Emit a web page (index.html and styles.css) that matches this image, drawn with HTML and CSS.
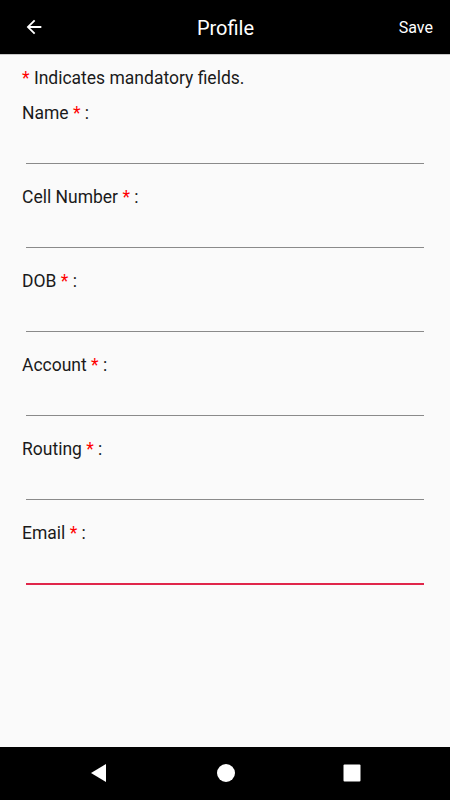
FILE: index.html
```html
<!DOCTYPE html>
<html>
<head>
<meta charset="utf-8">
<link rel="stylesheet" href="styles.css">
</head>
<body>
<div class="screen">
  <header class="topbar">
    <div class="back">
      <svg width="22" height="22" viewBox="0 0 24 24"><path d="M20 11H7.83l5.59-5.59L12 4l-8 8 8 8 1.41-1.41L7.83 13H20v-2z" fill="#fff"/></svg>
    </div>
    <div class="title">Profile</div>
    <div class="save">Save</div>
  </header>
  <main class="content">
    <p class="note"><span class="req">*</span> Indicates mandatory fields.</p>
    <div class="field"><div class="label">Name <span class="req">*</span> :</div><div class="line"></div></div>
    <div class="field"><div class="label">Cell Number <span class="req">*</span> :</div><div class="line"></div></div>
    <div class="field"><div class="label">DOB <span class="req">*</span> :</div><div class="line"></div></div>
    <div class="field"><div class="label">Account <span class="req">*</span> :</div><div class="line"></div></div>
    <div class="field"><div class="label">Routing <span class="req">*</span> :</div><div class="line"></div></div>
    <div class="field"><div class="label">Email <span class="req">*</span> :</div><div class="line active"></div></div>
  </main>
  <nav class="navbar">
    <svg width="18" height="20" viewBox="0 0 18 20"><path d="M16 1 L16 19 L1 10 Z" fill="#fff"/></svg>
    <svg width="20" height="20" viewBox="0 0 20 20"><circle cx="10" cy="10" r="9" fill="#fff"/></svg>
    <svg width="18" height="18" viewBox="0 0 18 18"><rect x="0.5" y="0.5" width="17" height="17" rx="1" fill="#fff"/></svg>
  </nav>
</div>
</body>
</html>
```
FILE: styles.css
```css
* { box-sizing: border-box; }
html, body { margin: 0; padding: 0; }
body {
  font-family: Roboto, "Noto Sans", sans-serif;
  background: #fafafa;
  color: #1a1a1a;
}
.screen {
  width: 450px;
  height: 800px;
  display: flex;
  flex-direction: column;
}
.topbar {
  height: 55px;
  background: #000;
  border-bottom: 1px solid #c8c8c8;
  display: grid;
  grid-template-columns: 1fr auto 1fr;
  align-items: center;
  padding: 0 17px 0 18px;
  color: #fff;
}
.back { display: flex; align-items: center; padding-left: 5px; }
.title { font-size: 20px; margin-top: 1px; }
.save { text-align: right; font-size: 16px; margin-top: 1px; }
.content {
  flex: 1;
  padding: 13px 26px 0 22px;
}
.note {
  margin: 0 0 15px 0;
  font-size: 17.5px;
  line-height: 20px;
}
.req { color: #f00; }
.field { margin-bottom: 23px; }
.label {
  font-size: 17.5px;
  line-height: 20px;
}
.line {
  margin-top: 40px;
  margin-left: 4px;
  height: 1px;
  background: #8a8a8a;
}
.line.active {
  height: 2px;
  background: #e0264a;
}
.navbar {
  height: 53px;
  background: #000;
  display: flex;
  align-items: center;
  justify-content: space-between;
  padding: 0 89px 2px 90px;
}
```
